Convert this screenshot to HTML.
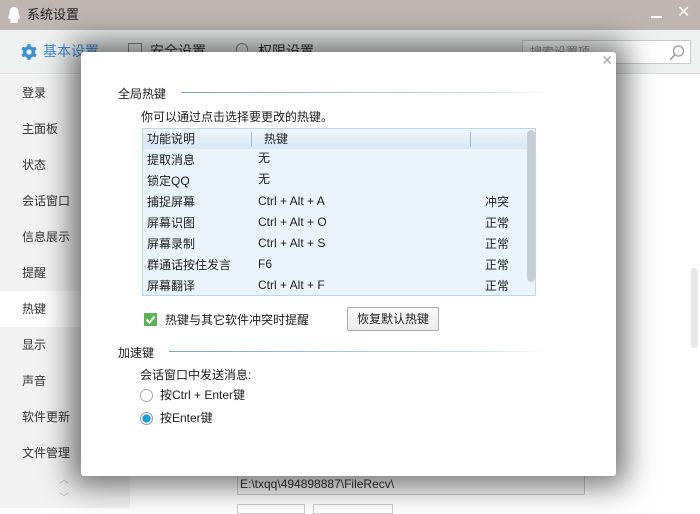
<!DOCTYPE html>
<html><head><meta charset="utf-8"><style>
*{margin:0;padding:0;box-sizing:border-box}
body{width:700px;height:508px;overflow:hidden;position:relative;background:#fff;font-family:"Liberation Sans","Noto Sans CJK SC",sans-serif;font-size:12px;color:#222;line-height:13px}
.abs{position:absolute;white-space:nowrap}
#title{left:0;top:0;width:700px;height:30px;background:#bfb6b1}
#tool{left:0;top:30px;width:700px;height:44px;background:#eff0f0;border-bottom:1px solid #ddd}
#side{left:0;top:75px;width:130px;height:433px;background:#f2f2f2}
.si{left:22px;font-size:12px;color:#333}
#dlg{left:81px;top:52px;width:535px;height:424px;background:#fff;border-radius:3px;box-shadow:0 0 30px 10px rgba(0,0,0,.55)}
.line{height:1px;background:linear-gradient(90deg,#7aa4c8,#c9dbe9 80%,rgba(255,255,255,0))}
#tbl{left:61px;top:76px;width:394px;height:168px;background:#eaf5fb;border:1px solid #bcd6e8}
.r{position:absolute;font-size:12px;color:#222}
.l{margin-top:2px}
</style></head><body>
<div id="title" class="abs"></div>
<svg class="abs" style="left:7px;top:6px" width="14" height="18" viewBox="0 0 14 18"><path d="M7 1C3.5 1 2.5 4 2.5 7L1 12c1 1 2 .5 2 .5 0 2 1 3 0 4.5h8c-1-1.5 0-2.5 0-4.5 0 0 1 .5 2-.5L11.5 7C11.5 4 10.5 1 7 1z" fill="#fff"/></svg>
<div class="abs" style="left:27px;top:8px;font-size:13px;color:#222">系统设置</div>
<div class="abs" style="left:651px;top:16px;width:11px;height:2px;background:#fff"></div>
<div class="abs" style="left:677px;top:6px;font-size:16px;color:#fff">✕</div>
<div id="tool" class="abs"></div>
<svg class="abs" style="left:20px;top:43px" width="18" height="18" viewBox="0 0 18 18"><g fill="#3b8fd6"><circle cx="9" cy="9" r="6"/><rect x="7.3" y="1" width="3.4" height="16" rx="1"/><rect x="7.3" y="1" width="3.4" height="16" rx="1" transform="rotate(60 9 9)"/><rect x="7.3" y="1" width="3.4" height="16" rx="1" transform="rotate(120 9 9)"/></g><circle cx="9" cy="9" r="2.6" fill="#eff0f0"/></svg>
<div class="abs" style="left:43px;top:45px;font-size:14px;color:#3b8fd6">基本设置</div>
<div class="abs" style="left:128px;top:43px;width:14px;height:14px;border:1px solid #888"></div>
<div class="abs" style="left:150px;top:45px;font-size:14px;color:#333">安全设置</div>
<div class="abs" style="left:236px;top:43px;width:12px;height:8px;border:1px solid #888;border-radius:6px 6px 0 0;border-bottom:none"></div>
<div class="abs" style="left:258px;top:45px;font-size:14px;color:#333">权限设置</div>
<div class="abs" style="left:522px;top:40px;width:169px;height:24px;background:#fff;border:1px solid #ccc;color:#999;padding:5px 7px">搜索设置项</div>
<svg class="abs" style="left:668px;top:44px" width="18" height="18" viewBox="0 0 18 18"><circle cx="10.5" cy="7" r="5" fill="none" stroke="#999" stroke-width="1.3"/><path d="M7 10.5L2 16" stroke="#999" stroke-width="1.5"/></svg>
<div id="side" class="abs"></div>
<div class="abs" style="left:0;top:291px;width:130px;height:36px;background:#fff"></div>
<div class="abs si" style="top:87px">登录</div>
<div class="abs si" style="top:123px">主面板</div>
<div class="abs si" style="top:159px">状态</div>
<div class="abs si" style="top:195px">会话窗口</div>
<div class="abs si" style="top:231px">信息展示</div>
<div class="abs si" style="top:267px">提醒</div>
<div class="abs si" style="top:303px">热键</div>
<div class="abs si" style="top:339px">显示</div>
<div class="abs si" style="top:375px">声音</div>
<div class="abs si" style="top:411px">软件更新</div>
<div class="abs si" style="top:447px">文件管理</div>
<div class="abs" style="left:59px;top:474px;color:#aab;font-size:10px">︿</div>
<div class="abs" style="left:59px;top:492px;color:#aab;font-size:10px">﹀</div>
<div class="abs" style="left:691px;top:268px;width:7px;height:80px;background:#e8e8e8;border-radius:4px"></div>
<div class="abs" style="left:237px;top:474px;width:348px;height:21px;border:1px solid #ccc;background:#fafafa;padding:3px 2px;color:#333">E:\txqq\494898887\FileRecv\</div>
<div class="abs" style="left:237px;top:504px;width:68px;height:10px;border:1px solid #ccc"></div>
<div class="abs" style="left:313px;top:504px;width:80px;height:10px;border:1px solid #ccc"></div>
<div id="dlg" class="abs">
 <div class="abs" style="right:3px;top:2px;font-size:14px;color:#aaa">✕</div>
 <div class="abs" style="left:37px;top:36px;font-size:12px">全局热键</div>
 <div class="abs line" style="left:100px;top:40px;width:370px"></div>
 <div class="abs" style="left:60px;top:59px">你可以通过点击选择要更改的热键。</div>
 <div id="tbl" class="abs">
  <div style="position:absolute;left:0;top:0;width:392px;height:20px;background:linear-gradient(#eef6fb,#d6e8f4)"></div>
  <div style="position:absolute;left:108px;top:3px;width:1px;height:15px;background:#9cc0dc"></div>
  <div style="position:absolute;left:327px;top:3px;width:1px;height:15px;background:#9cc0dc"></div>
  <div style="position:absolute;left:384px;top:1px;width:8px;height:152px;background:#c6ced4;border-radius:4px"></div>
  <div class="r" style="left:4px;top:4px">功能说明</div><div class="r" style="left:121px;top:4px">热键</div>
  <div class="r" style="left:4px;top:25px">提取消息</div><div class="r" style="left:115px;top:23px">无</div>
  <div class="r" style="left:4px;top:46px">锁定QQ</div><div class="r" style="left:115px;top:44px">无</div>
  <div class="r" style="left:4px;top:67px">捕捉屏幕</div><div class="r l" style="left:115px;top:64px">Ctrl + Alt + A</div><div class="r" style="left:342px;top:67px">冲突</div>
  <div class="r" style="left:4px;top:88px">屏幕识图</div><div class="r l" style="left:115px;top:85px">Ctrl + Alt + O</div><div class="r" style="left:342px;top:88px">正常</div>
  <div class="r" style="left:4px;top:109px">屏幕录制</div><div class="r l" style="left:115px;top:106px">Ctrl + Alt + S</div><div class="r" style="left:342px;top:109px">正常</div>
  <div class="r" style="left:4px;top:130px">群通话按住发言</div><div class="r l" style="left:115px;top:127px">F6</div><div class="r" style="left:342px;top:130px">正常</div>
  <div class="r" style="left:4px;top:151px">屏幕翻译</div><div class="r l" style="left:115px;top:148px">Ctrl + Alt + F</div><div class="r" style="left:342px;top:151px">正常</div>
 </div>
 <div class="abs" style="left:63px;top:261px;width:13px;height:13px;background:#5bb552"></div>
 <svg class="abs" style="left:63px;top:261px" width="13" height="13" viewBox="0 0 13 13"><path d="M2.5 6.5l3 3 5-6" fill="none" stroke="#fff" stroke-width="2"/></svg>
 <div class="abs" style="left:84px;top:262px">热键与其它软件冲突时提醒</div>
 <div class="abs" style="left:266px;top:255px;width:92px;height:24px;border:1px solid #aaa;border-radius:2px;background:linear-gradient(#fafafa,#ececec);text-align:center;padding-top:5px">恢复默认热键</div>
 <div class="abs" style="left:37px;top:295px">加速键</div>
 <div class="abs line" style="left:88px;top:299px;width:380px"></div>
 <div class="abs" style="left:59px;top:317px">会话窗口中发送消息:</div>
 <div class="abs" style="left:59px;top:337px;width:13px;height:13px;border:1px solid #aaa;border-radius:50%"></div>
 <div class="abs" style="left:79px;top:337px">按Ctrl + Enter键</div>
 <div class="abs" style="left:59px;top:360px;width:13px;height:13px;border:1px solid #999;border-radius:50%;background:radial-gradient(circle,#1a9fe6 0 3.8px,#fff 4.5px)"></div>
 <div class="abs" style="left:79px;top:360px">按Enter键</div>
</div>
</body></html>
